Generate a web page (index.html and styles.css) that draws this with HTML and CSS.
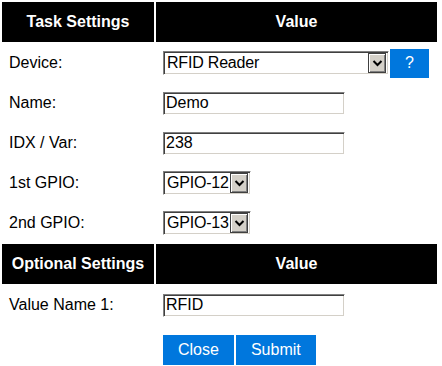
FILE: index.html
```html
<!DOCTYPE html>
<html lang="en">
<head>
  <meta charset="UTF-8">
  <meta name="viewport" content="width=device-width, initial-scale=1.0">
  <title>Task Settings</title>
  <link rel="stylesheet" href="styles.css">
</head>
<body>
  <table class="settings">
    <tr>
      <th class="col-label">Task Settings</th>
      <th>Value</th>
    </tr>
    <tr>
      <td>Device:</td>
      <td>
        <div class="field">
          <div class="select select-wide">
            <span class="select-text">RFID Reader</span>
            <span class="select-arrow">
              <svg width="11" height="8" viewBox="0 0 11 8"><path d="M1.5 2 L5.5 6 L9.5 2" stroke="#000" stroke-width="2" fill="none"/></svg>
            </span>
          </div>
          <a class="button button-help" href="#">?</a>
        </div>
      </td>
    </tr>
    <tr>
      <td>Name:</td>
      <td><div class="field"><input class="text-input" type="text" value="Demo"></div></td>
    </tr>
    <tr>
      <td>IDX / Var:</td>
      <td><div class="field"><input class="text-input" type="text" value="238"></div></td>
    </tr>
    <tr>
      <td>1st GPIO:</td>
      <td>
        <div class="field">
          <div class="select select-small">
            <span class="select-text">GPIO-12</span>
            <span class="select-arrow">
              <svg width="11" height="8" viewBox="0 0 11 8"><path d="M1.5 2 L5.5 6 L9.5 2" stroke="#000" stroke-width="2" fill="none"/></svg>
            </span>
          </div>
        </div>
      </td>
    </tr>
    <tr>
      <td>2nd GPIO:</td>
      <td>
        <div class="field">
          <div class="select select-small">
            <span class="select-text">GPIO-13</span>
            <span class="select-arrow">
              <svg width="11" height="8" viewBox="0 0 11 8"><path d="M1.5 2 L5.5 6 L9.5 2" stroke="#000" stroke-width="2" fill="none"/></svg>
            </span>
          </div>
        </div>
      </td>
    </tr>
    <tr>
      <th class="col-label">Optional Settings</th>
      <th>Value</th>
    </tr>
    <tr>
      <td>Value Name 1:</td>
      <td><div class="field"><input class="text-input" type="text" value="RFID"></div></td>
    </tr>
    <tr>
      <td></td>
      <td class="actions">
        <a class="button" href="#">Close</a><a class="button" href="#">Submit</a>
      </td>
    </tr>
  </table>
</body>
</html>
```

FILE: styles.css
```css
* {
  box-sizing: border-box;
}

body {
  margin: 0;
  font-family: "Liberation Sans", Arial, sans-serif;
  font-size: 16px;
  color: #000;
  background: #fff;
}

.settings {
  width: 439px;
  border-spacing: 2px;
  table-layout: fixed;
}

th {
  height: 40px;
  padding: 10px 0;
  background: #000;
  color: #fff;
  font-weight: bold;
  text-align: center;
  white-space: nowrap;
}

.col-label {
  width: 152px;
}

td {
  padding: 7px;
  text-align: left;
  vertical-align: middle;
}

.field {
  display: flex;
  align-items: center;
  height: 24px;
  gap: 1px;
}

.text-input {
  width: 182px;
  height: 23px;
  padding: 0 2px;
  font-family: inherit;
  font-size: 16px;
  color: #000;
  background: #fff;
  border: 1px solid;
  border-color: #808080 #fff #fff #808080;
  box-shadow: inset 1px 1px #404040, inset -1px -1px #d4d0c8;
  outline: none;
}

.select {
  display: flex;
  align-items: center;
  height: 24px;
  padding: 2px;
  background: #fff;
  border: 1px solid;
  border-color: #808080 #fff #fff #808080;
  box-shadow: inset 1px 1px #404040, inset -1px -1px #d4d0c8;
}

.select-wide {
  width: 226px;
}

.select-small {
  width: 88px;
}

.select-text {
  flex: 1;
  padding-left: 1px;
  white-space: nowrap;
  letter-spacing: -0.2px;
}

.select-arrow {
  display: flex;
  align-items: center;
  justify-content: center;
  width: 18px;
  height: 20px;
  background: #d4d0c8;
  border: 1px solid #404040;
  box-shadow: inset 1px 1px #fff, inset -1px -1px #808080;
}

.button {
  display: inline-block;
  padding: 5px 15px;
  line-height: 20px;
  background: #0077dd;
  color: #fff;
  text-decoration: none;
}

.button-help {
  height: 29px;
  padding: 4px 15px;
}

.actions .button {
  margin-top: 2px;
  margin-right: 2px;
}
```
